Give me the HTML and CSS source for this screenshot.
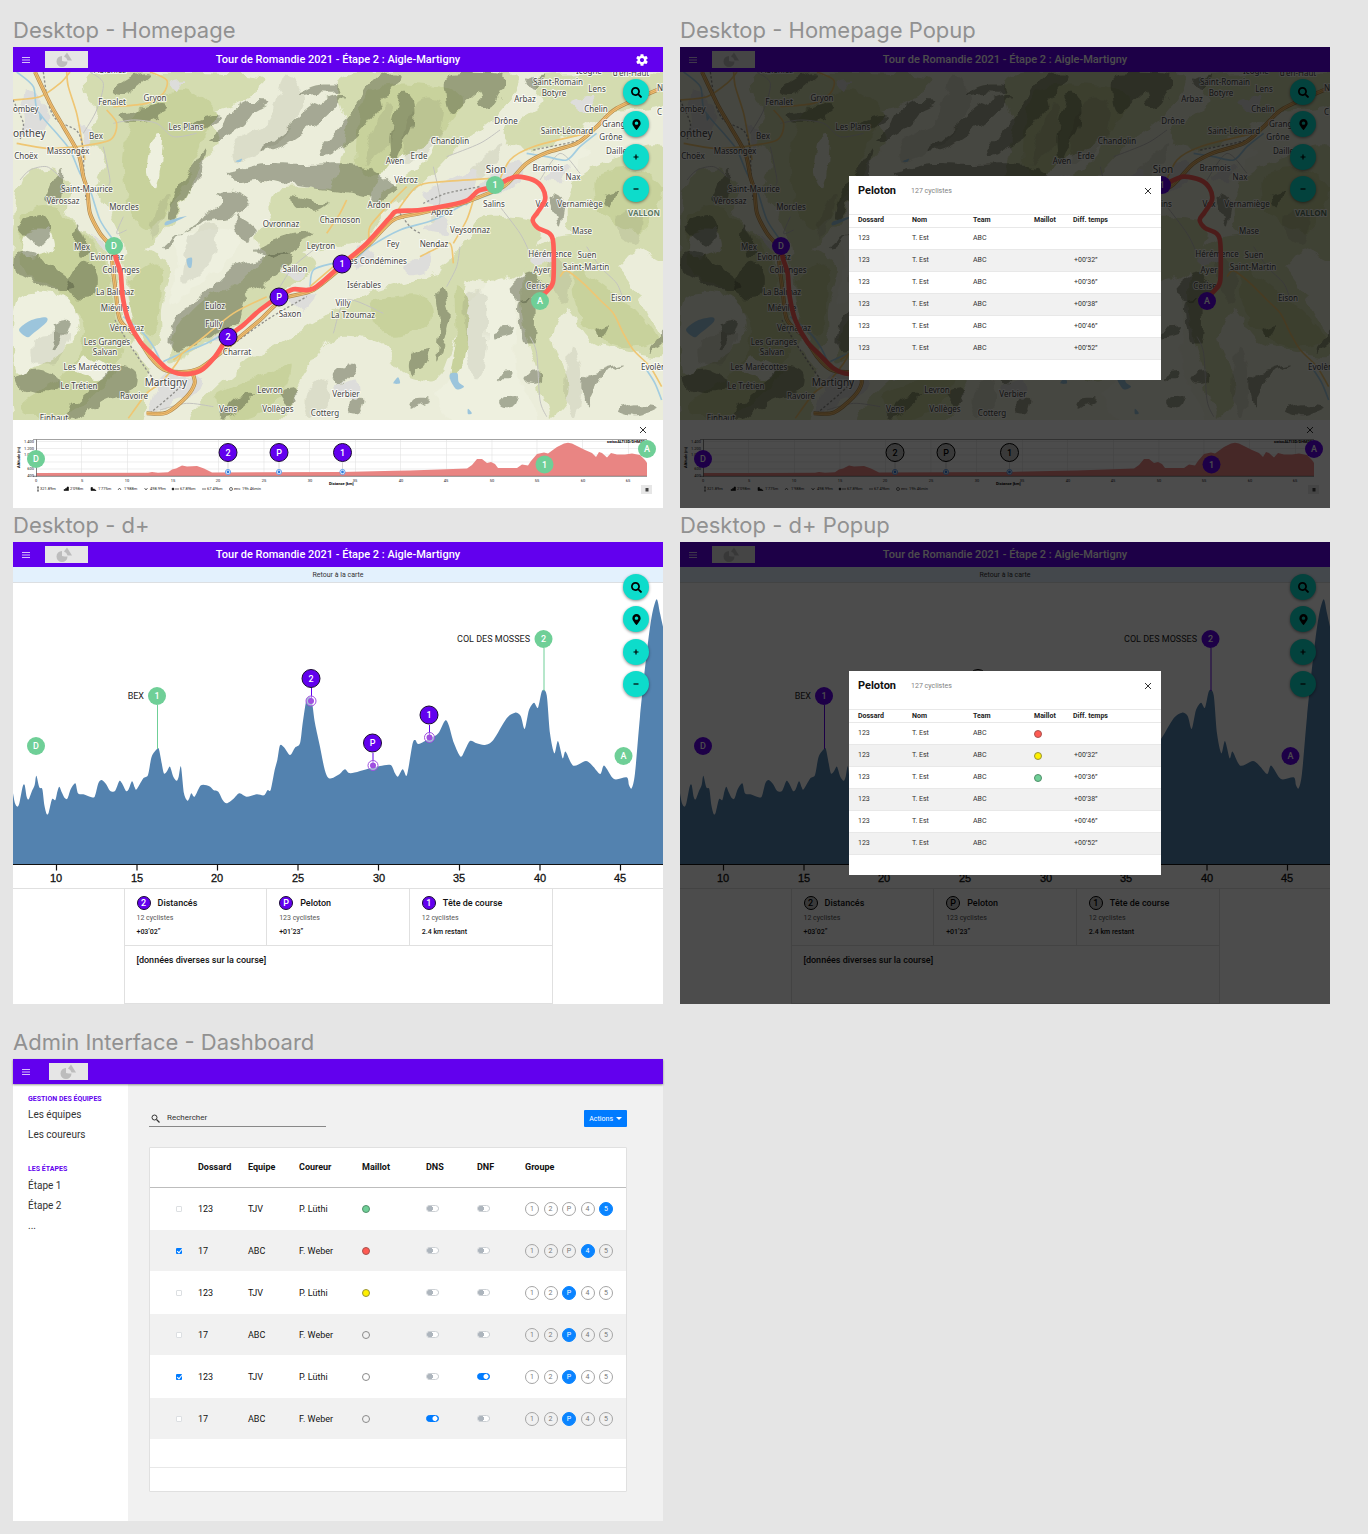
FILE: index.html
```html
<!DOCTYPE html>
<html lang="fr">
<head>
<meta charset="utf-8">
<meta name="viewport" content="width=device-width, initial-scale=1">
<title>Tour de Romandie 2021</title>
<link rel="stylesheet" href="styles.css">
</head>
<body>

<svg class="defs" width="0" height="0" aria-hidden="true">
  <defs>
    <filter id="rough" x="0" y="0" width="100%" height="100%">
      <feTurbulence type="fractalNoise" baseFrequency="0.07" numOctaves="2" seed="4" result="n"/>
      <feDisplacementMap in="SourceGraphic" in2="n" scale="13" xChannelSelector="R" yChannelSelector="G" result="d"/>
      <feGaussianBlur in="d" stdDeviation="0.6"/>
    </filter>
  </defs>
</svg>

<!-- Top bar -->
<template id="tpl-bar">
  <header class="bar">
    <div class="bar__left">
      <button class="icon-btn menu" type="button" aria-label="Menu"><svg width="10" height="10" viewBox="0 0 10 10"><path d="M1 2.500h8M1 5h8M1 7.500h8" stroke="currentColor" stroke-width="1"/></svg></button>
      <svg class="logo" viewBox="0 0 43 17" aria-hidden="true"><rect width="43" height="17" fill="#e6e6e6"/><path d="M17 5a5.500 5.500 0 1 0 5.500 5.500h-3L17 10z M22 1.500l5 8h-4.500a5.500 5.500 0 0 0-3.500-4z" fill="#bdbdbd"/></svg>
    </div>
    <h3 class="bar__title">Tour de Romandie 2021 - Étape 2 : Aigle-Martigny</h3>
    <div class="bar__right">
      <button class="icon-btn gear" type="button" aria-label="Réglages"><svg width="14" height="14" viewBox="0 0 24 24" fill="currentColor"><path d="M19.430 12.980c.04-.32.07-.64.07-.98s-.03-.66-.07-.98l2.110-1.650c.19-.15.24-.42.12-.64l-2-3.460c-.12-.22-.39-.3-.61-.22l-2.490 1c-.52-.4-1.080-.73-1.690-.98l-.38-2.650C14.460 2.180 14.250 2 14 2h-4c-.25 0-.46.18-.49.42l-.38 2.650c-.61.25-1.170.59-1.690.98l-2.490-1c-.23-.09-.49 0-.61.22l-2 3.460c-.13.22-.07.49.12.64l2.110 1.650c-.04.32-.07.65-.07.98s.03.66.07.98l-2.110 1.650c-.19.15-.24.42-.12.64l2 3.460c.12.22.39.3.61.22l2.490-1c.52.4 1.080.73 1.690.98l.38 2.650c.03.24.24.42.49.42h4c.25 0 .46-.18.49-.42l.38-2.650c.61-.25 1.170-.59 1.690-.98l2.490 1c.23.09.49 0 .61-.22l2-3.460c.12-.22.07-.49-.12-.64l-2.110-1.650zM12 15.500c-1.930 0-3.500-1.570-3.500-3.500s1.570-3.500 3.500-3.500 3.500 1.570 3.500 3.500-1.570 3.500-3.500 3.500z"/></svg></button>
    </div>
  </header>
</template>

<!-- Floating tools -->
<template id="tpl-tools">
  <div class="tools">
    <button class="fab" type="button" aria-label="Rechercher"><svg width="11" height="11" viewBox="0 0 512 512"><path d="M505 442.700L405.300 343c-4.500-4.500-10.600-7-17-7H372c27.600-35.300 44-79.700 44-128C416 93.100 322.900 0 208 0S0 93.100 0 208s93.100 208 208 208c48.300 0 92.700-16.400 128-44v16.300c0 6.400 2.500 12.500 7 17l99.700 99.700c9.400 9.400 24.600 9.400 33.900 0l28.300-28.300c9.400-9.400 9.400-24.600.1-34zM208 336c-70.700 0-128-57.200-128-128 0-70.700 57.200-128 128-128 70.700 0 128 57.200 128 128 0 70.700-57.200 128-128 128z"/></svg></button>
    <button class="fab" type="button" aria-label="Position"><svg width="9" height="11" viewBox="0 0 384 512"><path d="M172.268 501.670C26.970 291.031 0 269.413 0 192 0 85.961 85.961 0 192 0s192 85.961 192 192c0 77.413-26.970 99.031-172.268 309.670-9.535 13.774-29.930 13.773-39.464 0zM192 272c44.183 0 80-35.817 80-80s-35.817-80-80-80-80 35.817-80 80 35.817 80 80 80z"/></svg></button>
    <button class="fab" type="button" aria-label="Zoom avant"><svg width="6" height="6" viewBox="0 0 6 6"><path d="M3 .5v5M.5 3h5" stroke="#000" stroke-width="1.200"/></svg></button>
    <button class="fab" type="button" aria-label="Zoom arrière"><svg width="6" height="6" viewBox="0 0 6 6"><path d="M.5 3h5" stroke="#000" stroke-width="1.200"/></svg></button>
  </div>
</template>

<!-- Race map -->
<template id="tpl-map">
  <svg class="map" viewBox="13 72 650 348" role="img" aria-label="Carte de l'étape">
    <rect x="13" y="72" width="650" height="348" fill="#ebedda"/>
    <g filter="url(#rough)">
      <g transform="translate(3 3) scale(.33333)">
        <g fill="#d4dcb0" class="js-areas" data-set="green"></g>
        <g fill="#c8d29c" class="js-areas" data-set="deep"></g>
        <g fill="#eef0df" class="js-areas" data-set="light"></g>
        <g fill="#4c5138" fill-opacity=".44" class="js-areas" data-set="shade"></g>
        <g fill="#4c5138" fill-opacity=".1" class="js-areas" data-set="soft"></g>
        <g fill="#dddddb" class="js-areas" data-set="town"></g>
      </g>
    </g>
    <g transform="scale(.33333)" fill="none">
      <g fill="#9cc5dc" class="js-areas" data-set="lake"></g>
      <g stroke="#c3c3bf" stroke-width="3" class="js-lines" data-set="lane"></g>
      <g stroke="#a3cde0" stroke-width="5" class="js-lines" data-set="river"></g>
      <g stroke="#efc673" stroke-width="5" class="js-lines" data-set="road"></g>
      <g stroke="#8f8f8b" stroke-width="4" stroke-dasharray="7 6" class="js-lines" data-set="rail"></g>
      <g stroke="#b08a50" stroke-width="12" class="js-lines" data-set="motorway"></g>
      <g stroke="#f3c072" stroke-width="8" class="js-lines" data-set="motorway"></g>
      <g stroke="#c9974f" stroke-width="2" class="js-lines" data-set="motorway"></g>
    </g>
    <g class="places js-places"></g>
    <g transform="scale(.33333)" fill="none" stroke="#ff6058" stroke-width="14" stroke-linecap="round" stroke-linejoin="round" class="js-lines" data-set="route"></g>
    <g class="pin pin--stop"><circle cx="114" cy="246" r="9"/><text x="114" y="249">D</text></g>
    <g class="pin pin--stop"><circle cx="495" cy="185" r="9"/><text x="495" y="188">1</text></g>
    <g class="pin pin--stop"><circle cx="540" cy="301" r="9"/><text x="540" y="304">A</text></g>
    <g class="pin pin--group"><circle cx="228" cy="337" r="9"/><text x="228" y="340">2</text></g>
    <g class="pin pin--group"><circle cx="279" cy="297" r="9"/><text x="279" y="300">P</text></g>
    <g class="pin pin--group"><circle cx="342" cy="264" r="9"/><text x="342" y="267">1</text></g>
  </svg>
</template>

<!-- Altitude strip under the map -->
<template id="tpl-altitude">
  <section class="altitude">
    <div class="altitude__top"><button class="icon-btn close" type="button" aria-label="Fermer"><svg width="8" height="8" viewBox="0 0 8 8"><path d="M1 1l6 6M7 1l-6 6" stroke="currentColor" stroke-width="1"/></svg></button></div>
    <svg class="strip" viewBox="13 438 650 70" role="img" aria-label="Profil d'altitude">
      <path d="M36 441.500H647M36 448.500H647M36 455H647M36 462H647M36 469H647M81.500 440V476M127.500 440V476M173 440V476M218.500 440V476M264 440V476M309.500 440V476M355.500 440V476M400.500 440V476M446.500 440V476M492 440V476M537 440V476M582.500 440V476M628.500 440V476" stroke="#e3e3e3" stroke-width=".6" fill="none"/>
      <path d="M36 476V473L148 472.800 152 472 158 472.700 168 472.300 172 469.500 176 468.500 182 465.500 187 466.500 197 466 204 468.500 212 472.500 342 472 395 470.700 410 470.500 467 468.500 472 465 477 459 482 459 487 463 491 462 495 464 498 468 517 468 522 464.500 528 465.500 531 461 537 454 544 452.500 548 453.500 557 447 564 443.500 568 442.800 572 443.500 577 446 585 450 592 453 596 457 599 452 602 453 607 457.500 611 453 617 454.500 625 454.500 632 453.500 640 455 645 460 647 463V476z" fill="#e98583"/>
      <path d="M33 439.500H647" stroke="#8c8c8c" stroke-width=".8"/>
      <path d="M36.500 439.500V477M33 476.300H647" stroke="#666" stroke-width=".8"/>
      <g class="tiny tiny--end">
        <text x="34" y="443">1.400</text><text x="34" y="450">1.200</text><text x="34" y="456">1.000</text><text x="34" y="470">600</text><text x="34" y="477">400</text>
      </g>
      <g class="tiny tiny--mid">
        <text x="36" y="482">0</text><text x="82" y="482">5</text><text x="127" y="482">10</text><text x="173" y="482">15</text><text x="218" y="482">20</text><text x="264" y="482">25</text><text x="310" y="482">30</text><text x="355" y="482">35</text><text x="401" y="482">40</text><text x="446" y="482">45</text><text x="492" y="482">50</text><text x="537" y="482">55</text><text x="583" y="482">60</text><text x="628" y="482">65</text>
      </g>
      <g class="tiny tiny--bold">
        <text x="329" y="485">Distance [km]</text><text x="607" y="443">swissALTI3D/DHM25</text>
        <text transform="translate(20 468) rotate(-90)">Altitude [m]</text>
      </g>
      <g class="tiny">
        <text x="40" y="490">321.89m</text><text x="70" y="490">2'098m</text><text x="98" y="490">1'775m</text><text x="124" y="490">1'988m</text><text x="150" y="490">498.99m</text><text x="180" y="490">67.89km</text><text x="207" y="490">67.49km</text><text x="234" y="490">env. 19h 46min</text>
      </g>
      <g stroke="#111" stroke-width=".6" fill="none">
        <path d="M38 487v4M37 487h2M37 491h2M118 490l1.500-2 1.500 2M144.500 488l1.500 2 1.500-2M175 489h4M202 489h4"/>
        <circle cx="231" cy="489" r="1.500"/>
        <path d="M64 490.500v-1h1.500v-1H67v-1.500h1.500v3.500zM91 487.500h1.500v1.500h2v1H96v.5h-5z" fill="#111"/><circle cx="173" cy="489" r="1" fill="#111"/>
      </g>
      <rect x="641" y="485" width="11" height="9" fill="#e6e6e6"/><path d="M645.500 488h3v3.500h-3z" fill="#444"/>
      <path d="M228 462v10M279 462v10M342.500 462v10" stroke="#c8c8c8" stroke-width=".7"/>
      <g fill="#fff" stroke="#4a8fe8" stroke-width=".8"><circle cx="228" cy="472" r="2.600"/><circle cx="279" cy="472" r="2.600"/><circle cx="342.500" cy="472" r="2.600"/></g>
      <g fill="#2f7de1"><circle cx="228" cy="472" r="1.400"/><circle cx="279" cy="472" r="1.400"/><circle cx="342.500" cy="472" r="1.400"/></g>
      <g class="pin pin--stop"><circle cx="36" cy="459" r="9"/><text x="36" y="462">D</text></g>
      <g class="pin pin--group"><circle cx="228" cy="452.500" r="9"/><text x="228" y="456">2</text></g>
      <g class="pin pin--group"><circle cx="279" cy="452.500" r="9"/><text x="279" y="456">P</text></g>
      <g class="pin pin--group"><circle cx="342.500" cy="452.500" r="9"/><text x="342.500" y="456">1</text></g>
      <g class="pin pin--stop"><circle cx="544.500" cy="464.500" r="9"/><text x="544.500" y="468">1</text></g>
      <g class="pin pin--stop"><circle cx="647" cy="449" r="9"/><text x="647" y="452">A</text></g>
    </svg>
  </section>
</template>

<!-- Climb profile -->
<template id="tpl-climb">
  <a class="back" href="#carte">Retour à la carte</a>
  <svg class="climb" viewBox="13 583 650 305" role="img" aria-label="Profil de l'étape">
    <g transform="translate(0 510) scale(.33333)" fill="#5382af" class="js-profile"></g>
    <path d="M13 864.500H663M56.500 864.500v6M137 864.500v6M217.500 864.500v6M298 864.500v6M378.500 864.500v6M459.500 864.500v6M540 864.500v6M620.500 864.500v6" stroke="#111" stroke-width="1.200" fill="none"/>
    <g class="axis"><text x="56" y="882">10</text><text x="137" y="882">15</text><text x="217" y="882">20</text><text x="298" y="882">25</text><text x="379" y="882">30</text><text x="459" y="882">35</text><text x="540" y="882">40</text><text x="620" y="882">45</text></g>
    <g class="place-name"><text x="144" y="699">BEX</text><text x="530" y="642">COL DES MOSSES</text></g>
    <path class="stem stem--stop" d="M157.500 705V749M544 648V691"/>
    <path class="stem stem--group" d="M311.500 688v12M373 753v12M429.500 725v12"/>
    <g fill="#fff" fill-opacity=".5" stroke="#a04fe0" stroke-width="1"><circle cx="311" cy="701" r="5"/><circle cx="373" cy="765.500" r="5"/><circle cx="429.500" cy="737.500" r="5"/></g>
    <g fill="#a04fe0"><circle cx="311" cy="701" r="3"/><circle cx="373" cy="765.500" r="3"/><circle cx="429.500" cy="737.500" r="3"/></g>
    <g class="pin pin--stop"><circle cx="36" cy="746" r="9"/><text x="36" y="749">D</text></g>
    <g class="pin pin--stop"><circle cx="157" cy="696" r="9"/><text x="157" y="699">1</text></g>
    <g class="pin pin--stop"><circle cx="543.500" cy="639" r="9"/><text x="543.500" y="642">2</text></g>
    <g class="pin pin--stop"><circle cx="623.500" cy="756" r="9"/><text x="623.500" y="759">A</text></g>
    <g class="pin pin--group"><circle cx="311" cy="678.500" r="9"/><text x="311" y="682">2</text></g>
    <g class="pin pin--group"><circle cx="372.500" cy="743" r="9"/><text x="372.500" y="746">P</text></g>
    <g class="pin pin--group"><circle cx="429" cy="715" r="9"/><text x="429" y="718">1</text></g>
  </svg>
  <div class="stats">
    <div class="stats__grid">
      <section class="stat"><h4><span class="badge">2</span>Distancés</h4><p>12 cyclistes</p><strong>+03’02”</strong></section>
      <section class="stat"><h4><span class="badge">P</span>Peloton</h4><p>123 cyclistes</p><strong>+01’23”</strong></section>
      <section class="stat"><h4><span class="badge">1</span>Tête de course</h4><p>12 cyclistes</p><strong>2.4 km restant</strong></section>
      <section class="stat stat--wide"><h4>[données diverses sur la course]</h4></section>
    </div>
  </div>
</template>

<!-- Group pop-up -->
<template id="tpl-popup">
  <div class="overlay">
    <section class="popup" role="dialog" aria-label="Peloton">
      <header class="popup__head"><h4>Peloton</h4><span>127 cyclistes</span>
        <button class="icon-btn close" type="button" aria-label="Fermer"><svg width="8" height="8" viewBox="0 0 8 8"><path d="M1 1l6 6M7 1l-6 6" stroke="currentColor" stroke-width="1"/></svg></button></header>
      <table class="riders">
        <colgroup><col class="w-63"><col class="w-61"><col class="w-61"><col class="w-39"><col></colgroup>
        <thead><tr><th>Dossard</th><th>Nom</th><th>Team</th><th>Maillot</th><th>Diff. temps</th></tr></thead>
        <tbody></tbody>
      </table>
    </section>
  </div>
</template>

<main class="board">
  <article class="screen">
    <h2>Desktop - Homepage</h2>
    <div class="frame frame--gear" id="carte" data-parts="bar map tools altitude"></div>
  </article>
  <article class="screen">
    <h2>Desktop - Homepage Popup</h2>
    <div class="frame frame--popup" data-parts="bar map tools altitude popup"></div>
  </article>
  <article class="screen">
    <h2>Desktop - d+</h2>
    <div class="frame" data-parts="bar climb tools"></div>
  </article>
  <article class="screen">
    <h2>Desktop - d+ Popup</h2>
    <div class="frame frame--popup" data-parts="bar climb tools popup" data-jerseys="red yellow green"></div>
  </article>
  <article class="screen screen--admin">
    <h2>Admin Interface - Dashboard</h2>
    <div class="frame frame--admin">
      <header class="bar bar--admin">
        <div class="bar__left">
          <button class="icon-btn menu" type="button" aria-label="Menu"><svg width="10" height="10" viewBox="0 0 10 10"><path d="M1 2.500h8M1 5h8M1 7.500h8" stroke="currentColor" stroke-width="1"/></svg></button>
          <svg class="logo" viewBox="0 0 39 17" aria-hidden="true"><rect width="39" height="17" fill="#e6e6e6"/><path d="M17 5a5.500 5.500 0 1 0 5.500 5.500h-3L17 10z M22 1.500l5 8h-4.500a5.500 5.500 0 0 0-3.500-4z" fill="#bdbdbd"/></svg>
        </div>
      </header>
      <div class="admin">
        <nav class="side">
          <h3>GESTION DES ÉQUIPES</h3>
          <a href="#equipes">Les équipes</a>
          <a href="#coureurs">Les coureurs</a>
          <h3>LES ÉTAPES</h3>
          <a href="#etape1">Étape 1</a>
          <a href="#etape2">Étape 2</a>
          <a href="#etapes">...</a>
        </nav>
        <div class="content">
          <div class="toolbar">
            <label class="search"><svg width="9" height="9" viewBox="0 0 9 9" fill="none" stroke="#333" aria-hidden="true"><circle cx="3.500" cy="3.500" r="2.500" stroke-width="1"/><path d="M5.500 5.500l3 3" stroke-width="1.200"/></svg><input type="search" placeholder="Rechercher" aria-label="Rechercher"></label>
            <button class="actions" type="button">Actions<span class="caret"></span></button>
          </div>
          <div class="card">
            <table class="roster">
              <colgroup><col class="w-48"><col class="w-50"><col class="w-51"><col class="w-63"><col class="w-64"><col class="w-51"><col class="w-48"><col></colgroup>
              <thead><tr><th><span class="sr">Choix</span></th><th>Dossard</th><th>Equipe</th><th>Coureur</th><th>Maillot</th><th>DNS</th><th>DNF</th><th>Groupe</th></tr></thead>
              <tbody></tbody>
            </table>
            <div class="card__gap"></div>
            <div class="card__foot"></div>
          </div>
        </div>
      </div>
    </div>
  </article>
</main>
<script src="app.js"></script>
</body>
</html>
```

FILE: styles.css
```css
* { box-sizing: border-box; }
body { margin: 0; background: #e5e5e5; font-family: Roboto, "Liberation Sans", sans-serif; color: #111; }
h2, h3, h4, p { margin: 0; }
button { font: inherit; border: 0; padding: 0; cursor: pointer; }
svg { display: block; }
.defs { position: absolute; }
.sr { position: absolute; width: 1px; height: 1px; overflow: hidden; clip-path: inset(50%); }

.board { display: grid; grid-template-columns: repeat(2, minmax(0, 1fr)); column-gap: 17px; padding: 13px 38px 13px 13px; }
.screen h2 { font: 400 22px/34px Inter, sans-serif; color: #919191; white-space: nowrap; }
.screen--admin { margin-top: 21px; }
.frame { position: relative; background: #fff; }

/* top bar */
.bar { display: grid; grid-template-columns: 1fr auto 1fr; align-items: center; height: 25px; padding: 0 8px; background: #6200ee; color: #fff; }
.bar__left { display: flex; align-items: center; gap: 14px; }
.bar__right { display: flex; justify-content: flex-end; padding-right: 6px; }
.bar__title { font-size: 11px; line-height: 16px; font-weight: 500; }
.logo { height: 17px; width: auto; }
.icon-btn { display: flex; background: none; color: inherit; }
.menu { opacity: .75; }
.gear { visibility: hidden; }
.frame--gear .gear { visibility: visible; }
.bar--admin { position: relative; box-shadow: 0 1px 2px rgba(0, 0, 0, .4); }
.bar--admin .bar__left { gap: 18px; }

/* floating tools */
.tools { position: absolute; top: 32px; right: 14px; display: flex; flex-direction: column; justify-content: space-between; height: 123px; }
.fab { display: grid; place-items: center; width: 26px; height: 26px; border-radius: 50%; background: #0ddccb; box-shadow: 0 1px 3px rgba(0, 0, 0, .45); }

/* map */
.map, .strip, .climb { width: 100%; height: auto; }
.strip { overflow: visible; }
.places text { font: 400 8px "Noto Sans", sans-serif; text-anchor: middle; fill: #454543; stroke: #fff; stroke-opacity: .75; stroke-width: 2px; stroke-linejoin: round; paint-order: stroke; }
.places .start { text-anchor: start; }
.places .city { font-size: 10px; }
.places .region { font-weight: 700; fill: #5d7863; text-anchor: start; }

.pin text { font-size: 9px; font-weight: 500; text-anchor: middle; fill: #fff; }
.pin--stop circle { fill: #6fcf97; }
.pin--group circle { fill: #6200ee; stroke: #1a0a33; stroke-width: 1px; }
.frame--popup .pin--stop circle { fill: #6200ee; }
.frame--popup .pin--group circle { fill: #c4c4c4; stroke: #000; }
.frame--popup .pin--group text { fill: #000; }

.altitude__top { display: flex; justify-content: flex-end; align-items: center; height: 18px; padding: 2px 16px 0 0; color: #333; }
.tiny text { font-size: 4px; fill: #222; }
.tiny--mid text { text-anchor: middle; }
.tiny--end text { text-anchor: end; }
.tiny--bold text { font-weight: 700; fill: #000; }

/* climb */
.back { display: block; height: 16px; border-bottom: 1px solid #dcdfe2; background: #e3f1fd; color: #333; font-size: 7px; line-height: 16px; text-align: center; text-decoration: none; }
.axis text { font: 400 11px "Liberation Sans", sans-serif; text-anchor: middle; fill: #111; stroke: #111; stroke-width: .3px; }
.place-name text { font-size: 9px; text-anchor: end; fill: #222; }
.stem { stroke-width: 1px; fill: none; }
.stem--stop { stroke: #6fcf97; }
.stem--group { stroke: #6200ee; }
.frame--popup .stem--stop { stroke: #6200ee; }
.frame--popup .stem--group { stroke: #444; }

.stats { display: flex; justify-content: center; border-top: 1px solid #e0e0e0; }
.stats__grid { display: grid; grid-template-columns: repeat(3, 1fr); width: 66%; border-left: 1px solid #e0e0e0; }
.stat { height: 57px; padding: 7px 0 0 12px; border-right: 1px solid #e0e0e0; border-bottom: 1px solid #e0e0e0; }
.stat h4 { display: flex; align-items: center; gap: 7px; height: 14px; font-size: 9px; font-weight: 500; line-height: 14px; }
.stat p { padding-top: 1px; font-size: 7px; line-height: 14px; color: #555; }
.stat strong { display: block; font-size: 7px; line-height: 14px; font-weight: 500; }
.stat--wide { grid-column: 1 / -1; height: 58px; }
.badge { display: grid; place-items: center; width: 14px; height: 14px; border-radius: 50%; border: 1px solid #1a0a33; background: #6200ee; color: #fff; font-size: 9px; line-height: 12px; }
.frame--popup .badge { background: #c4c4c4; border-color: #000; color: #000; }

/* pop-up */
.overlay { position: absolute; inset: 0; display: grid; place-items: center; background: rgba(0, 0, 0, .7); }
.popup { width: 48%; padding-bottom: 20px; background: #fff; }
.popup__head { display: flex; align-items: center; height: 38px; padding: 0 9px 8px; }
.popup__head h4 { font-size: 11px; line-height: 14px; }
.popup__head span { margin-left: 15px; font-size: 7px; line-height: 14px; color: #828282; }
.popup__head .close { margin-left: auto; color: #333; }
table { width: 100%; border-collapse: collapse; table-layout: fixed; }
th, td { padding: 0; text-align: left; }
.riders { font-size: 7px; line-height: 9px; color: #333; }
.riders th { height: 13px; font-weight: 700; border: solid #e8e8e8; border-width: 1px 0; color: #222; }
.riders td { height: 22px; border-bottom: 1px solid #e8e8e8; }
.riders th:first-child, .riders td:first-child { padding-left: 9px; }
.riders td:last-child { padding-left: 1px; }
.riders tbody tr:nth-child(even) { background: #f1f1f1; }
.w-39 { width: 39px; } .w-48 { width: 48px; } .w-50 { width: 50px; } .w-51 { width: 51px; }
.w-61 { width: 61px; } .w-63 { width: 63px; } .w-64 { width: 64px; }

.dot { display: block; width: 8px; height: 8px; border: 1px solid #8a8a8a; border-radius: 50%; }
.dot--red { background: #ff5a52; border-color: #a85450; }
.dot--yellow { background: #fff000; border-color: #98933a; }
.dot--green { background: #6fcf97; border-color: #528f6b; }

/* admin */
.admin { display: flex; background: #f1f1f1; }
.side { width: 115px; padding: 8px 0 0 15px; background: #fff; }
.side h3 { font-size: 7px; line-height: 15px; color: #6200ee; }
.side a { display: block; font-size: 10px; line-height: 20px; color: #333; text-decoration: none; }
.side h3 ~ h3 { margin-top: 17px; }
.side h3 + a { margin-top: -2px; }
.side h3 ~ h3 + a { margin-top: -1px; }
.content { flex: 1; min-width: 0; padding: 26px 36px 29px 21px; }
.toolbar { display: flex; justify-content: space-between; align-items: center; margin-bottom: 20px; }
.search { display: flex; align-items: center; gap: 7px; width: 177px; height: 17px; padding-left: 2px; border-bottom: 1px solid #888; }
.search input { flex: 1; min-width: 0; border: 0; padding: 0; background: none; outline: 0; font: 400 8px/12px Roboto, sans-serif; }
.search input::placeholder { color: #333; opacity: 1; }
.actions { display: flex; align-items: center; gap: 3px; height: 17px; padding: 0 5px; border-radius: 1px; background: #007bff; color: #fff; font-size: 7px; }
.caret { border: 3px solid transparent; border-top-color: #fff; border-bottom: 0; }
.card { border: 1px solid #e0e0e0; border-radius: 1px; background: #fff; }
.roster { font-size: 9px; line-height: 12px; }
.roster th { height: 39px; border-bottom: 1px solid #bdbdbd; font-weight: 700; }
.roster td { height: 43px; }
.roster tbody tr:nth-child(even) { background: #f1f1f1; }
.roster tbody tr:nth-child(even) td { height: 41px; }
.roster td:first-child { padding-left: 26px; }
.card__gap { height: 29px; border-bottom: 1px solid #e8e8e8; }
.card__foot { height: 23px; }

.tick, .switch, .group input { appearance: none; display: block; margin: 0; }
.tick { width: 6px; height: 6px; border: 1px solid #dcdfe2; border-radius: 1px; background: #fff; }
.tick:checked { border: 0; background: #007bff; position: relative; }
.tick:checked::after { content: ""; position: absolute; left: 2px; top: 0; width: 2px; height: 4px; border: solid #fff; border-width: 0 1px 1px 0; transform: rotate(40deg); }
.switch { width: 13px; height: 7px; border: 1px solid #ccd0d4; border-radius: 4px; background: radial-gradient(circle at 3px 50%, #adb5bd 3px, #fff 3px); }
.switch:checked { border-color: #007bff; background: radial-gradient(circle at 8px 50%, #fff 2px, #007bff 3px); }
.groups { display: flex; justify-content: space-between; width: 88px; }
.group { display: grid; place-items: center; width: 14px; height: 14px; border: 1px solid #a5a5a5; border-radius: 50%; font-size: 7px; line-height: 12px; color: #777; }
.group input { position: absolute; width: 1px; height: 1px; }
.group:has(:checked) { border-color: #0a84ff; background: #0a84ff; color: #fff; }
```

FILE: app.js
```js
const AREAS = {
  green: [
    '270 216 760 216 740 280 690 310 620 340 650 420 600 480 560 560 520 640 480 690 430 740 500 780 480 920 480 1010 430 1040 380 900 360 720 330 640 280 560 310 450 250 420 280 330',
    '39 590 130 500 200 540 190 620 240 680 290 720 330 800 350 900 400 1050 440 1110 430 1180 390 1262 39 1262',
    '1030 216 1520 216 1480 340 1380 420 1300 500 1240 560 1150 620 1100 670 960 660 1000 520 1030 380',
    '820 560 1000 560 1130 590 1120 660 1060 720 940 740 800 760 760 700 800 640',
    '560 1262 700 1100 900 980 1050 890 1150 850 1300 810 1400 750 1380 920 1340 1060 1300 1130 1200 1110 1140 1020 1000 1000 900 1120 820 1262',
    '500 1080 520 980 600 890 700 840 830 730 940 780 830 870 700 970 580 1040',
    '1620 720 1720 700 1850 800 1950 960 1985 1060 1850 1040 1760 1010 1690 920 1650 1000 1700 1160 1640 1240 1600 1100 1560 960 1560 800',
    '1700 560 1800 480 1990 440 1990 760 1900 740 1820 800 1700 700',
    '1440 640 1600 660 1580 780 1480 840 1340 800 1400 700',
    '1600 216 1990 216 1990 300 1820 330 1700 400 1560 440 1500 380 1620 300'
  ],
  deep: [
    '400 330 540 260 640 330 600 400 540 560 440 680 380 620 360 480',
    '60 640 160 620 300 760 330 900 360 1040 280 1180 120 1250 60 1200 200 1100 240 960 160 860 60 800',
    '1100 260 1300 250 1380 300 1260 440 1120 520 1060 460',
    '1720 800 1850 880 1960 1010 1840 1030 1740 960',
    '1360 850 1400 900 1420 1010 1380 1090 1340 1140 1360 1000',
    '640 1180 800 1110 860 1090 820 1200 700 1250',
    '1780 520 1900 500 1980 560 1920 680 1800 640',
    '380 840 470 780 460 980 400 960', '1100 900 1260 880 1280 960 1160 1000'
  ],
  light: [
    '39 890 180 880 230 960 190 1040 100 1090 39 1100', '440 420 480 400 460 560 430 520',
    '520 700 600 680 700 690 690 760 580 850 500 900 520 800', '1160 480 1260 430 1300 400 1280 460 1180 540 1100 590',
    '1400 900 1500 820 1540 900 1540 1100 1600 1260 1360 1260 1300 1180 1380 1080', '60 690 130 680 150 740 60 760',
    '240 1060 320 1100 290 1130 220 1110', '1690 420 1760 440 1700 500 1640 500'
  ],
  shade: [
    '800 300 730 296 680 330 660 370 616 408 650 412 720 366 750 330', '616 430 580 480 520 560 498 640 520 630 560 560 600 500',
    '1000 246 930 250 888 278 940 272 1000 270', '990 280 930 310 860 370 776 440 820 438 900 390 980 330 1020 280',
    '672 512 700 504 780 484 900 486 1020 484 1110 500 1180 560 1130 590 1010 566 880 548 780 530 700 540',
    '640 570 700 565 740 590 700 636 620 650 540 686 500 736 486 730 560 670 650 610', '1000 380 1050 320 1090 250 1130 216 1190 216 1120 320 1060 400 980 450 950 450',
    '1190 280 1230 290 1230 380 1190 440 1170 480 1160 400', '1340 216 1500 216 1480 300 1440 310 1420 270 1350 330 1330 290',
    '350 340 420 320 480 300 500 310 440 350 380 356', '540 370 620 340 660 346 600 380', '330 260 400 216 440 216 370 270',
    '150 530 180 500 170 590 130 590', '50 660 120 640 140 700 110 730 60 690', '226 660 256 740 236 760 216 710',
    '39 750 100 760 200 830 210 860 150 860 60 820 39 810', '240 780 280 820 270 880 210 880 190 850', '150 960 200 950 180 1010 140 1040 156 1000',
    '40 1120 110 1100 180 1136 140 1170 60 1160', '350 1090 400 1110 380 1170 300 1190 220 1250 180 1240 260 1160',
    '500 1030 520 940 600 880 680 800 760 770 840 740 860 780 800 830 730 880 700 960 620 1000 540 1040',
    '760 740 860 696 930 690 900 716 810 760', '700 640 760 680 740 710 700 690', '1300 870 1326 860 1340 940 1320 1030 1300 1080 1310 960',
    '1220 1060 1280 1036 1260 1090 1220 1110', '1530 830 1590 806 1630 860 1580 890 1540 890', '1550 900 1600 900 1600 1010 1560 1010',
    '1470 980 1530 970 1520 990 1470 1000', '1480 1120 1530 1110 1520 1130 1490 1130', '1560 1120 1610 1110 1610 1140 1570 1140',
    '1490 1190 1540 1170 1530 1210 1500 1210', '1740 1130 1800 1100 1860 1084 1790 1124 1770 1180 1750 1200', '1770 990 1820 970 1800 1010',
    '1840 1220 1900 1204 1970 1214 1900 1240', '1940 1040 1985 980 1985 1010', '1220 1220 1230 1190 1280 1190 1240 1210',
    '990 1120 1040 1080 1060 1100 1010 1150', '690 1190 750 1184 710 1224 650 1240', '830 1170 870 1156 880 1190 850 1200', '1040 1190 1080 1180 1070 1230 1040 1230',
    '1640 580 1680 600 1670 670 1660 640', '1800 580 1840 566 1820 610', '1570 230 1620 216 1590 260', '860 580 940 600 980 596 940 620 870 610'
  ],
  soft: [
    '850 216 900 300 820 420 700 480 700 420 800 350', '560 700 640 660 620 780 540 840', '1380 900 1450 880 1440 1100 1400 1100',
    '1640 760 1700 800 1690 900 1650 860', '100 1000 200 1000 160 1080 90 1070', '1280 640 1330 600 1300 660', '1400 500 1500 420 1480 470 1400 540',
    '900 1180 960 1130 980 1200 920 1240', '1840 640 1920 620 1900 720 1850 700', '440 700 470 600 500 580 470 680', '1700 1040 1740 1100 1720 1240 1690 1200',
    '1240 300 1320 300 1300 420 1200 480', '1130 330 1160 300 1160 420 1080 480'
  ],
  town: [
    '60 260 100 280 130 340 110 400 60 380', '440 1230 480 1120 560 1120 600 1130 580 1170 500 1200', '1420 560 1480 500 1540 470 1560 520 1500 570',
    '1260 570 1340 530 1420 500 1400 590 1290 610', '1070 730 1120 760 1060 800', '1220 780 1290 750 1270 800 1210 810', '1600 740 1660 760 1600 790',
    '1000 1160 1060 1130 1060 1190', '230 370 270 390 250 440', '260 690 330 740 340 780', '1700 300 1780 280 1740 330', '1620 520 1700 480 1680 530', '620 1010 680 980 700 1010',
    '860 880 940 870 900 920', '1260 680 1320 640 1340 690', '500 240 540 230 520 270', '840 800 900 810 870 830'
  ],
  lake: [
    '58 986 90 962 136 952 140 966 100 1000 84 1012 66 1002', '1350 1122 1372 1120 1376 1146 1392 1160 1370 1168 1352 1142',
    '1180 1150 1194 1132 1200 1150', '560 778 576 774 574 802 564 800', '1404 1226 1416 1240 1404 1242', '500 664 560 648 500 676', '706 484 726 476 720 486', '118 340 128 350 120 362', '1390 610 1410 600 1400 616'
  ]
};

const LINES = {
  motorway: [
    '105 216 150 310 190 380 235 460 250 530 262 570 270 640 300 700 330 740 340 820 348 880 360 960 410 1010 450 1070 490 1108 545 1116 600 1104 660 1060 720 1010 780 960 850 896 940 870 1040 790 1110 730 1180 660 1260 640 1380 612 1440 590 1510 560 1540 532 1580 490 1640 458 1730 430 1790 380 1850 325 1990 262',
    '440 1240 500 1238 560 1190 584 1150 578 1120'
  ],
  road: [
    '200 216 205 260 230 340 245 420 255 480', '39 300 120 290 180 250 210 216', '50 430 140 445 230 440 330 420 350 370 320 330', '340 320 440 310 490 280 500 240 450 216',
    '385 1255 440 1180 480 1150 530 1090 545 1060', '520 1080 600 1020 700 940 800 890', '1180 650 1250 560 1330 545 1480 535', '1110 740 1110 680 1180 600 1220 560',
    '1490 560 1530 480 1600 440 1760 400', '1680 830 1700 812 1750 850 1800 900 1840 940 1870 1000 1900 1050 1950 1100 1985 1160', '1260 770 1300 750 1350 730 1360 790', '1360 730 1400 660 1420 600', '930 860 1000 800', '980 700 1020 640 1040 600'
  ],
  rail: ['130 216 145 310 170 360 230 392 248 440 252 520 258 600', '345 960 380 1020 440 1110 470 1150', '450 1240 520 1180 560 1140', '690 1040 800 960 920 890', '1270 610 1340 580 1440 560', '1200 640 1230 680 1260 700', '1600 450 1700 430 1740 420', '39 300 70 370 60 420'],
  river: ['50 216 100 260 112 330 170 400 210 450 240 520 270 570 300 660 340 720', '370 950 430 1000 460 1040 480 1080', '490 1085 540 1062 620 1030 700 985', '930 860 940 810 1000 790 1060 780 1110 740 1200 690 1300 660 1400 610 1480 580', '1580 460 1640 470 1700 480 1740 440 1790 400', '1940 1110 1965 1150 1985 1200'],
  lane: ['270 216 310 250 290 330 250 400', '340 370 400 360 470 370 520 410 590 400', '310 440 330 540 320 560', '60 540 90 510 140 500 180 530', '1590 1010 1610 1060 1620 1200 1640 1250', '1340 860 1370 800 1380 740', '1000 1000 1040 900 1150 940', '1760 740 1800 800 1850 850 1870 900', '1300 500 1320 600 1300 640', '1340 470 1440 430 1500 390', '1500 620 1560 700 1590 760', '840 860 880 800 940 750', '380 690 350 700 370 650', '1620 540 1680 460 1740 520', '480 1230 560 1210 640 1220'],
  route: ['341 738 348 776 362 820 368 890 385 960 420 1025 460 1066 500 1105 545 1122 600 1113 645 1070 684 1012 730 975 780 930 837 890 880 868 940 866 1027 792 1100 730 1170 652 1190 634 1260 630 1350 615 1404 600 1436 572 1484 560 1510 545 1550 530 1600 540 1628 565 1635 600 1612 638 1598 660 1614 684 1648 700 1660 730 1660 840 1646 868 1618 895']
};

const PROFILE = '39 850 45 880 52 890 58 880 68 830 74 825 80 860 86 868 95 845 104 825 109 797 118 832 127 838 133 885 140 912 146 908 156 868 166 870 172 845 178 830 186 848 195 865 203 865 212 838 226 820 234 850 250 853 270 860 284 860 295 820 305 810 318 822 330 842 345 843 358 813 366 820 378 843 386 838 396 814 404 832 410 838 430 805 444 795 455 740 472 716 478 722 490 785 496 790 503 780 510 770 520 800 530 812 536 800 543 770 552 850 562 872 568 865 574 850 584 860 603 826 628 829 640 840 655 845 668 870 680 880 700 867 718 850 740 860 770 853 792 856 803 840 812 840 824 780 832 750 840 706 852 712 870 735 885 713 900 700 908 640 918 575 925 562 935 570 945 640 960 710 972 770 982 800 995 805 1018 793 1035 778 1052 790 1110 775 1140 768 1172 765 1185 790 1194 800 1208 778 1219 798 1226 770 1238 700 1246 690 1256 702 1290 685 1315 670 1335 632 1346 645 1362 700 1382 740 1395 720 1410 693 1430 700 1455 705 1480 690 1520 625 1545 608 1562 618 1574 657 1587 600 1602 578 1614 593 1626 543 1640 555 1650 670 1663 730 1674 693 1688 745 1697 725 1720 767 1758 753 1780 770 1801 792 1813 767 1842 807 1880 802 1887 825 1895 835 1905 790 1920 620 1940 430 1955 320 1970 268 1980 310 1989 350';

const PLACES = [
  ['Fenalet', 112, 105], ['Gryon', 155, 101], ['Les Plans', 186, 130], ['Bex', 96, 139], ['Massongex', 68, 154], ['Choëx', 26, 159],
  ['ombey', 13, 112, 'start'], ['onthey', 13, 137, 'start city'], ['Saint-Maurice', 87, 192], ['Vérossaz', 63, 204], ['Morcles', 124, 210],
  ['Ovronnaz', 281, 227], ['Chamoson', 340, 223], ['Leytron', 321, 249], ['Mex', 82, 250], ['Evionnaz', 107, 260], ['Collonges', 121, 273],
  ['La Balmaz', 115, 295], ['Miéville', 115, 311], ['Vernayaz', 127, 331], ['Les Granges', 107, 345], ['Salvan', 105, 355],
  ['Les Marécottes', 92, 370], ['Le Trétien', 79, 389], ['Martigny', 166, 386, 'city'], ['Ravoire', 134, 399], ['Finhaut', 54, 421],
  ['Vens', 228, 412], ['Vollèges', 278, 412], ['Levron', 270, 393], ['Verbier', 346, 397], ['Cotterg', 325, 416], ['Charrat', 237, 355],
  ['Fully', 214, 327], ['Euloz', 215, 309], ['Saxon', 290, 317], ['Saillon', 295, 272], ['Villy', 343, 306], ['La Tzoumaz', 353, 318],
  ['Isérables', 364, 288], ['Les Condémines', 376, 264], ['Fey', 393, 247], ['Nendaz', 434, 247], ['Veysonnaz', 470, 233], ['Aproz', 442, 215],
  ['Ardon', 379, 208], ['Vétroz', 406, 183], ['Erde', 419, 159], ['Aven', 395, 164], ['Chandolin', 450, 144], ['Drône', 506, 124],
  ['Arbaz', 525, 102], ['Botyre', 554, 96], ['Saint-Romain', 558, 85], ['Lens', 597, 92], ['Chelin', 596, 112], ['Saint-Léonard', 567, 134],
  ['Granges', 602, 127, 'start'], ['Grône', 611, 140], ['Daillet', 606, 154, 'start'], ['Bramois', 548, 171], ['Nax', 573, 180],
  ['Sion', 496, 173, 'city'], ['Salins', 494, 207], ['Vex', 542, 207], ['Vernamiège', 580, 207], ['Mase', 582, 234], ['Hérémence', 550, 257],
  ['Suen', 587, 258], ['Saint-Martin', 586, 270], ['Ayer', 542, 273], ['Cerise', 538, 289], ['Eison', 621, 301], ['Evolène', 641, 370, 'start'],
  ['Icogne', 589, 74], ["d'en-Haut", 631, 76], ['Ableniez', 110, 73], ['N', 657, 91, 'start'], ['C', 657, 115, 'start'], ['VALLON', 628, 216, 'region']
];

const NS = 'http://www.w3.org/2000/svg';

// Smooth path through a flat list of x y pairs.
function smooth(text, closed) {
  const n = text.split(' ').map(Number);
  const p = [];
  for (let i = 0; i < n.length; i += 2) p.push([n[i], n[i + 1]]);
  const at = i => closed ? p[(i + p.length) % p.length] : p[Math.max(0, Math.min(p.length - 1, i))];
  const count = closed ? p.length : p.length - 1;
  let d = `M${p[0]}`;
  for (let i = 0; i < count; i++) {
    const [a, b, c, e] = [at(i - 1), at(i), at(i + 1), at(i + 2)];
    d += `C${b[0] + (c[0] - a[0]) / 7} ${b[1] + (c[1] - a[1]) / 7} ${c[0] - (e[0] - b[0]) / 7} ${c[1] - (e[1] - b[1]) / 7} ${c[0]} ${c[1]}`;
  }
  return closed ? d + 'z' : d;
}

function addPath(parent, d) {
  const path = document.createElementNS(NS, 'path');
  path.setAttribute('d', d);
  parent.append(path);
}

document.querySelectorAll('[data-parts]').forEach(frame => {
  frame.dataset.parts.split(' ').forEach(name => {
    frame.append(document.getElementById('tpl-' + name).content.cloneNode(true));
  });
  frame.querySelectorAll('.js-areas').forEach(g => AREAS[g.dataset.set].forEach(s => addPath(g, smooth(s, true))));
  frame.querySelectorAll('.js-lines').forEach(g => LINES[g.dataset.set].forEach(s => addPath(g, smooth(s, false))));
  frame.querySelectorAll('.js-profile').forEach(g => addPath(g, smooth(PROFILE, false) + 'V1063H39z'));
  frame.querySelectorAll('.js-places').forEach(g => PLACES.forEach(([name, x, y, kind]) => {
    const t = document.createElementNS(NS, 'text');
    t.setAttribute('x', x);
    t.setAttribute('y', y);
    if (kind) t.setAttribute('class', kind);
    t.textContent = name;
    g.append(t);
  }));
  const jerseys = (frame.dataset.jerseys || '').split(' ');
  const body = frame.querySelector('.riders tbody');
  if (body) body.innerHTML = ['', '+00’32”', '+00’36”', '+00’38”', '+00’46”', '+00’52”'].map((gap, i) =>
    `<tr><td>123</td><td>T. Est</td><td>ABC</td><td>${jerseys[i] ? `<span class="dot dot--${jerseys[i]}"></span>` : ''}</td><td>${gap}</td></tr>`).join('');
});

// [selected, number, team, rider, jersey, DNS, DNF, group]
const ROSTER = [
  [0, 123, 'TJV', 'P. Lüthi', 'green', 0, 0, '5'],
  [1, 17, 'ABC', 'F. Weber', 'red', 0, 0, '4'],
  [0, 123, 'TJV', 'P. Lüthi', 'yellow', 0, 0, 'P'],
  [0, 17, 'ABC', 'F. Weber', 'none', 0, 0, 'P'],
  [1, 123, 'TJV', 'P. Lüthi', 'none', 0, 1, 'P'],
  [0, 17, 'ABC', 'F. Weber', 'none', 1, 0, 'P']
];
const on = flag => flag ? ' checked' : '';
document.querySelector('.roster tbody').innerHTML = ROSTER.map(([sel, num, team, rider, jersey, dns, dnf, group], i) => `<tr>
  <td><input class="tick" type="checkbox" aria-label="Choisir ${rider}"${on(sel)}></td>
  <td>${num}</td><td>${team}</td><td>${rider}</td><td><span class="dot dot--${jersey}"></span></td>
  <td><input class="switch" type="checkbox" aria-label="DNS"${on(dns)}></td>
  <td><input class="switch" type="checkbox" aria-label="DNF"${on(dnf)}></td>
  <td><div class="groups">${['1', '2', 'P', '4', '5'].map(g => `<label class="group"><input type="radio" name="g${i}"${on(g === group)}>${g}</label>`).join('')}</div></td>
</tr>`).join('');
```
